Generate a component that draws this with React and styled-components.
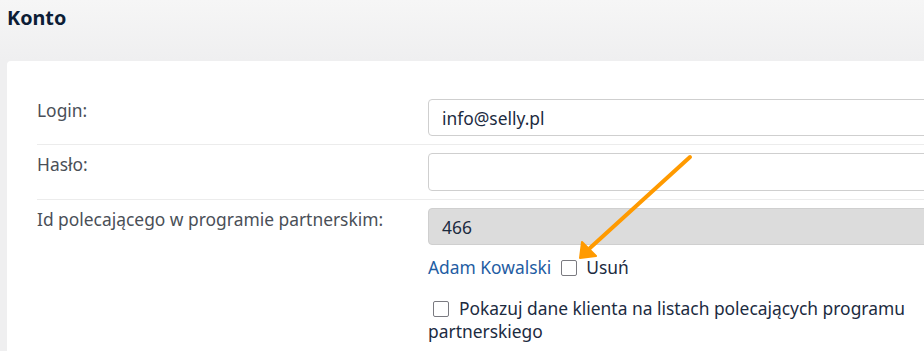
import React from 'react'
import styled, { createGlobalStyle } from 'styled-components'

const GlobalStyle = createGlobalStyle`
  html, body {
    margin: 0;
    padding: 0;
    overflow: hidden;
  }
  body {
    font-family: "Noto Sans", "Open Sans", sans-serif;
    background: linear-gradient(180deg, #f6f6f6 0%, #efeff0 60px, #efeff0 100%);
    width: 924px;
    height: 351px;
  }
  * {
    box-sizing: border-box;
  }
`

const Page = styled.div`
  position: relative;
  width: 924px;
  height: 351px;
  overflow: hidden;
`

const Title = styled.h1`
  margin: 0;
  padding: 4px 0 0 7px;
  height: 61px;
  font-size: 19.8px;
  font-weight: 700;
  line-height: 28px;
  color: #0c1d36;
`

const Card = styled.div`
  margin-left: 7px;
  width: 1000px;
  background: #fff;
  border-radius: 4px;
  padding: 30px 30px 20px 30px;
`

const Row = styled.div`
  display: flex;
  padding: 8px 0;
  & + & {
    border-top: 1px solid #ececec;
  }
`

const Label = styled.div`
  width: 391px;
  flex-shrink: 0;
  font-size: 17.4px;
  line-height: 23px;
  color: #4a4f57;
`

const Field = styled.div`
  flex: 1;
  display: flex;
  flex-direction: column;
`

const Input = styled.div`
  height: ${p => p.$h || 37}px;
  border: 1px solid #cfcfcf;
  border-radius: 4px;
  background: ${p => (p.$disabled ? '#dcdcdc' : '#fff')};
  padding: 0 13px;
  display: flex;
  align-items: center;
  font-size: 17.4px;
  color: #1c2b3f;
`

const Line = styled.div`
  display: flex;
  align-items: center;
  font-size: 17.4px;
  line-height: 23px;
  color: #1c2b3f;
  margin-top: ${p => p.$top || 0}px;
`

const Link = styled.a`
  color: #1f5da3;
  text-decoration: none;
  margin-right: 10px;
`

const Box = styled.span`
  display: inline-block;
  width: 16px;
  height: 16px;
  border: 1.5px solid #7a7a80;
  border-radius: 2px;
  background: #fff;
  margin-right: ${p => p.$gap || 9}px;
  margin-left: ${p => p.$indent || 0}px;
  flex-shrink: 0;
`

const Wrapped = styled.div`
  font-size: 17.4px;
  line-height: 23px;
  color: #1c2b3f;
  margin-top: 18px;
  width: 490px;
`

const InlineBox = styled(Box)`
  vertical-align: -2px;
`

const Arrow = styled.svg`
  position: absolute;
  left: 0;
  top: 0;
  pointer-events: none;
`

const App = () => {
  return (
    <Page>
      <GlobalStyle />
      <Title>Konto</Title>
      <Card>
        <Row>
          <Label>Login:</Label>
          <Field>
            <Input>info@selly.pl</Input>
          </Field>
        </Row>
        <Row>
          <Label>Hasło:</Label>
          <Field>
            <Input $h={38} />
          </Field>
        </Row>
        <Row>
          <Label>Id polecającego w programie partnerskim:</Label>
          <Field>
            <Input $disabled>466</Input>
            <Line $top={11}>
              <Link href="#">Adam Kowalski</Link>
              <Box />
              Usuń
            </Line>
            <Wrapped>
              <InlineBox $indent={5} $gap={10} />
              Pokazuj dane klienta na listach polecających programu partnerskiego
            </Wrapped>
          </Field>
        </Row>
      </Card>
      <Arrow width="924" height="351" viewBox="0 0 924 351">
        <line x1="690" y1="157" x2="590" y2="248" stroke="#ff9a00" strokeWidth="4" strokeLinecap="round" />
        <polygon points="580,258 582,242 596,256" fill="#ff9a00" stroke="#ff9a00" strokeWidth="2" strokeLinejoin="round" />
      </Arrow>
    </Page>
  )
}

export default App
